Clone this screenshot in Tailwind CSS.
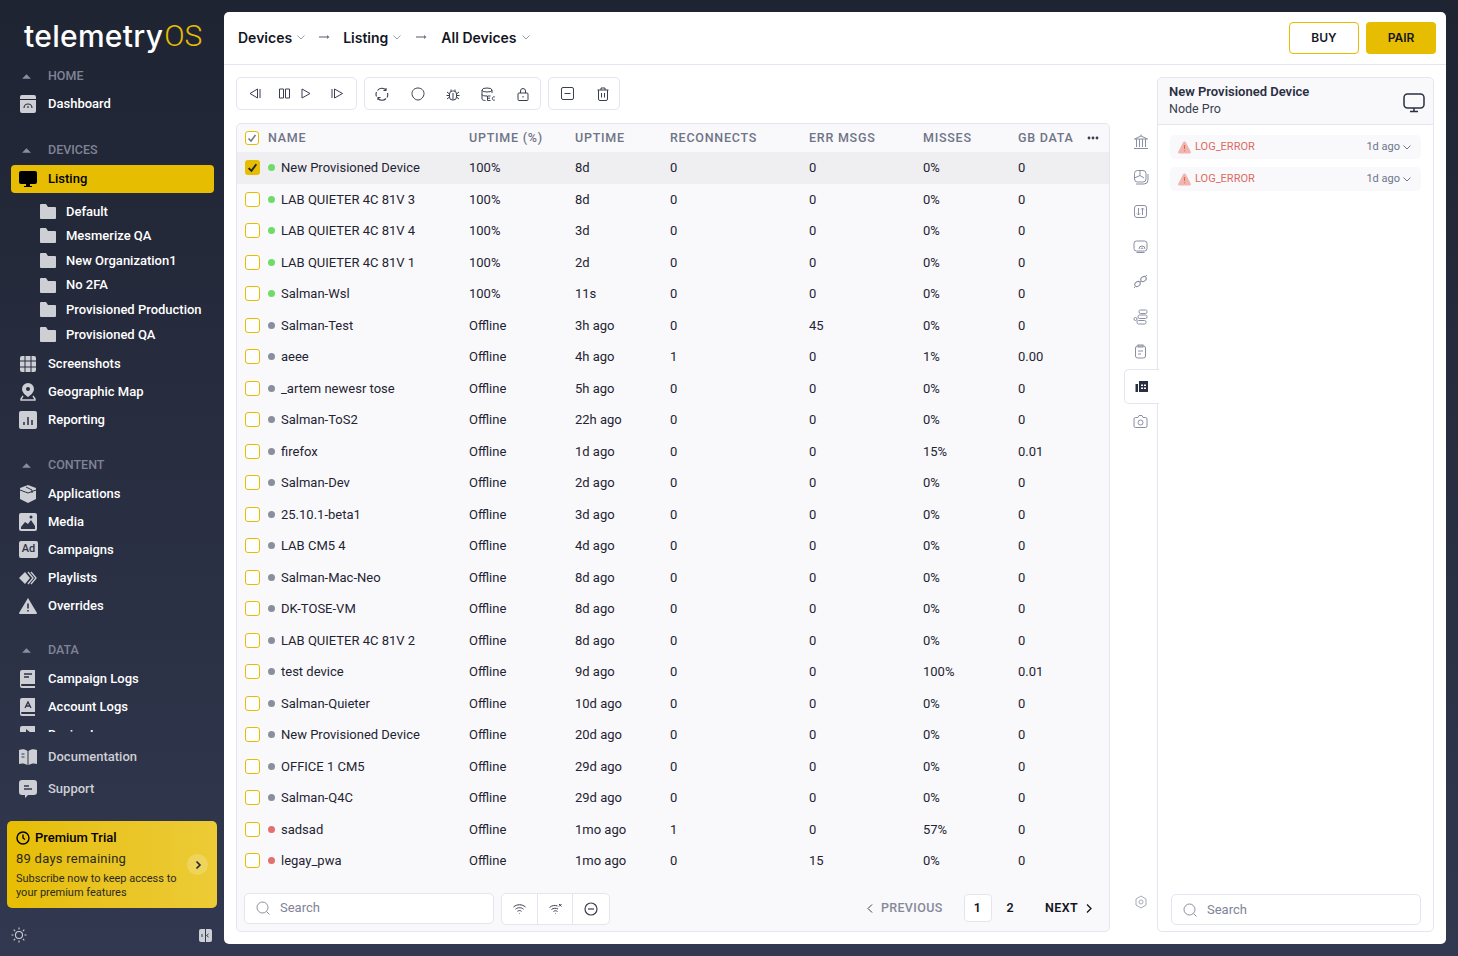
<!DOCTYPE html>
<html lang="en">
  <head>
    <meta charset="UTF-8" />
    <meta name="viewport" content="width=device-width, initial-scale=1.0" />
    <script src="https://cdn.jsdelivr.net/npm/@tailwindcss/browser@4"></script>
    <title>telemetryOS Devices</title>
  </head>

  <body class="h-[956px] w-[1458px] overflow-hidden bg-gradient-to-b from-[#1f2433] to-[#32384f] font-['Roboto',sans-serif] text-[13px] text-[#1f2433]">
    <div class="flex h-full">
      <!-- Sidebar -->
      <aside class="flex h-full w-[224px] shrink-0 flex-col">
        <div class="flex h-[62px] items-start pl-[24px] pt-[18px] font-['Inter',sans-serif] text-[30px] leading-[36px] font-medium tracking-[0.3px] text-white">
          telemetry<span class="ml-px font-['Roboto',sans-serif] font-light tracking-normal text-[#e6bd00]">OS</span>
        </div>

        <nav class="h-[670px] overflow-hidden">
          <div class="flex h-[28px] items-center pl-[21px] text-[12.500px] font-medium text-[#7f8494]">
            <svg class="mr-[16px] h-[11px] w-[11px]" viewBox="0 0 10 10"><path d="M5 3l4 4H1z" fill="#8b8f9d" /></svg>HOME
          </div>
          <a class="flex h-[28px] items-center pl-[19px] font-medium text-white">
            <svg class="mr-[11px] h-[18px] w-[18px]" viewBox="0 0 18 18"><path d="M3 0h12a2 2 0 012 2v2H1V2a2 2 0 012-2zM1 5h16v11a2 2 0 01-2 2H3a2 2 0 01-2-2z" fill="#cdcfd5" /><path d="M5 13a4 4 0 018 0M9 13v-2" stroke="#2a2f42" stroke-width="1.2" fill="none" /></svg>Dashboard
          </a>

          <div class="mt-[18px] flex h-[28px] items-center pl-[21px] text-[12.500px] font-medium text-[#7f8494]">
            <svg class="mr-[16px] h-[11px] w-[11px]" viewBox="0 0 10 10"><path d="M5 3l4 4H1z" fill="#8b8f9d" /></svg>DEVICES
          </div>
          <a class="ml-[11px] mt-px flex h-[28px] w-[203px] items-center rounded-[4px] bg-[#e6bd00] pl-[8px] font-medium text-black">
            <svg class="mr-[11px] h-[18px] w-[18px]" viewBox="0 0 18 18"><path d="M2 1h14a2 2 0 012 2v9a2 2 0 01-2 2h-5v2h2v1H5v-1h2v-2H2a2 2 0 01-2-2V3a2 2 0 012-2z" fill="#000" /></svg>Listing
          </a>

          <ul class="mt-[6px] font-medium text-white">
            <li class="flex h-[24.6px] items-center pl-[40px]"><svg class="mr-[10px] h-[15px] w-[16px]" viewBox="0 0 16 15"><path d="M1 0h5l2 3h7a1 1 0 011 1v10a1 1 0 01-1 1H1a1 1 0 01-1-1V1a1 1 0 011-1z" fill="#cdcfd5" /></svg>Default</li>
            <li class="flex h-[24.6px] items-center pl-[40px]"><svg class="mr-[10px] h-[15px] w-[16px]" viewBox="0 0 16 15"><path d="M1 0h5l2 3h7a1 1 0 011 1v10a1 1 0 01-1 1H1a1 1 0 01-1-1V1a1 1 0 011-1z" fill="#cdcfd5" /></svg>Mesmerize QA</li>
            <li class="flex h-[24.6px] items-center pl-[40px]"><svg class="mr-[10px] h-[15px] w-[16px]" viewBox="0 0 16 15"><path d="M1 0h5l2 3h7a1 1 0 011 1v10a1 1 0 01-1 1H1a1 1 0 01-1-1V1a1 1 0 011-1z" fill="#cdcfd5" /></svg>New Organization1</li>
            <li class="flex h-[24.6px] items-center pl-[40px]"><svg class="mr-[10px] h-[15px] w-[16px]" viewBox="0 0 16 15"><path d="M1 0h5l2 3h7a1 1 0 011 1v10a1 1 0 01-1 1H1a1 1 0 01-1-1V1a1 1 0 011-1z" fill="#cdcfd5" /></svg>No 2FA</li>
            <li class="flex h-[24.6px] items-center pl-[40px]"><svg class="mr-[10px] h-[15px] w-[16px]" viewBox="0 0 16 15"><path d="M1 0h5l2 3h7a1 1 0 011 1v10a1 1 0 01-1 1H1a1 1 0 01-1-1V1a1 1 0 011-1z" fill="#cdcfd5" /></svg>Provisioned Production</li>
            <li class="flex h-[24.6px] items-center pl-[40px]"><svg class="mr-[10px] h-[15px] w-[16px]" viewBox="0 0 16 15"><path d="M1 0h5l2 3h7a1 1 0 011 1v10a1 1 0 01-1 1H1a1 1 0 01-1-1V1a1 1 0 011-1z" fill="#cdcfd5" /></svg>Provisioned QA</li>
          </ul>

          <a class="mt-[3px] flex h-[28px] items-center pl-[19px] font-medium text-white">
            <svg class="mr-[11px] h-[18px] w-[18px]" viewBox="0 0 18 18" fill="#cdcfd5"><path d="M3 1h2.500v4.500H1V3a2 2 0 012-2zM6.500 1h5v4.500h-5zM12.500 1H15a2 2 0 012 2v2.500h-4.500zM1 6.500h4.500v5H1zM6.500 6.500h5v5h-5zM12.500 6.500H17v5h-4.500zM1 12.500h4.500V17H3a2 2 0 01-2-2zM6.500 12.500h5V17h-5zM12.500 12.500H17V15a2 2 0 01-2 2h-2.500z" /></svg>Screenshots
          </a>
          <a class="flex h-[28px] items-center pl-[19px] font-medium text-white">
            <svg class="mr-[11px] h-[18px] w-[18px]" viewBox="0 0 18 18"><path fill-rule="evenodd" d="M9 0a6 6 0 016 6c0 3-3 6-6 8-3-2-6-5-6-8a6 6 0 016-6zm0 4a2 2 0 100 4 2 2 0 000-4z" fill="#cdcfd5" /><path d="M4 13l-2 3v1h14v-1l-2-3" stroke="#cdcfd5" stroke-width="1.4" fill="none" /></svg>Geographic Map
          </a>
          <a class="flex h-[28px] items-center pl-[19px] font-medium text-white">
            <svg class="mr-[11px] h-[18px] w-[18px]" viewBox="0 0 18 18"><rect width="18" height="18" rx="2" fill="#cdcfd5" /><path d="M5 11v3M9 6v8M13 9v5" stroke="#2a2f42" stroke-width="1.5" /></svg>Reporting
          </a>

          <div class="mt-[18px] flex h-[28px] items-center pl-[21px] text-[12.500px] font-medium text-[#7f8494]">
            <svg class="mr-[16px] h-[11px] w-[11px]" viewBox="0 0 10 10"><path d="M5 3l4 4H1z" fill="#8b8f9d" /></svg>CONTENT
          </div>
          <a class="flex h-[28px] items-center pl-[19px] font-medium text-white">
            <svg class="mr-[11px] h-[18px] w-[18px]" viewBox="0 0 18 18"><path d="M9 0l8 3v11l-8 4-8-4V3z" fill="#cdcfd5" /><path d="M1 5l8 3 8-3M7 2l6 3v3" stroke="#2d3246" stroke-width="1" fill="none" /></svg>Applications
          </a>
          <a class="flex h-[28px] items-center pl-[19px] font-medium text-white">
            <svg class="mr-[11px] h-[18px] w-[18px]" viewBox="0 0 18 18"><rect width="18" height="18" rx="2" fill="#cdcfd5" /><path d="M2 14l4-5 3 2 3-4 4 6v3H2z" fill="#2d3246" /><circle cx="12" cy="4" r="1.5" fill="#2d3246" /></svg>Media
          </a>
          <a class="flex h-[28px] items-center pl-[19px] font-medium text-white">
            <span class="mr-[10px] flex h-[17px] w-[19px] items-center justify-center rounded-[2px] bg-[#cdcfd5] text-[11px] font-medium text-[#2d3246]">Ad</span>Campaigns
          </a>
          <a class="flex h-[28px] items-center pl-[19px] font-medium text-white">
            <svg class="mr-[11px] h-[18px] w-[18px]" viewBox="0 0 18 18"><path d="M6 3l5 6-5 6-6-6z" fill="#cdcfd5" /><path d="M9 3l5 6-5 6M12 3l5 6-5 6" stroke="#cdcfd5" stroke-width="1.3" fill="none" /></svg>Playlists
          </a>
          <a class="flex h-[28px] items-center pl-[19px] font-medium text-white">
            <svg class="mr-[11px] h-[18px] w-[18px]" viewBox="0 0 18 18"><path d="M9 1l9 15a1 1 0 01-1 1H1a1 1 0 01-1-1z" fill="#cdcfd5" /><path d="M9 6.500v5M9 13v1.500" stroke="#2d3246" stroke-width="1.6" /></svg>Overrides
          </a>

          <div class="mt-[17px] flex h-[28px] items-center pl-[21px] text-[12.500px] font-medium text-[#7f8494]">
            <svg class="mr-[16px] h-[11px] w-[11px]" viewBox="0 0 10 10"><path d="M5 3l4 4H1z" fill="#8b8f9d" /></svg>DATA
          </div>
          <a class="flex h-[28px] items-center pl-[19px] font-medium text-white">
            <svg class="mr-[11px] h-[18px] w-[18px]" viewBox="0 0 18 18"><path d="M3 0h13v14H3a1 1 0 000 2h13v2H3a2 2 0 01-2-2V2a2 2 0 012-2z" fill="#cdcfd5" /><path d="M5 4h8M5 7h5" stroke="#2d3246" stroke-width="1.4" /></svg>Campaign Logs
          </a>
          <a class="flex h-[28px] items-center pl-[19px] font-medium text-white">
            <svg class="mr-[11px] h-[18px] w-[18px]" viewBox="0 0 18 18"><path d="M3 0h13v14H3a1 1 0 000 2h13v2H3a2 2 0 01-2-2V2a2 2 0 012-2z" fill="#cdcfd5" /><path d="M6 10l3-6 3 6M7 8h4" stroke="#2d3246" stroke-width="1.3" fill="none" /></svg>Account Logs
          </a>
          <a class="flex h-[28px] items-center pl-[19px] font-medium text-white">
            <svg class="mr-[11px] h-[18px] w-[18px]" viewBox="0 0 18 18"><path d="M3 0h13v14H3a1 1 0 000 2h13v2H3a2 2 0 01-2-2V2a2 2 0 012-2z" fill="#cdcfd5" /><path d="M7 3l5 4-5 4z" fill="#2d3246" /></svg>Device Logs
          </a>
        </nav>

        <a class="mt-[9px] flex h-[32px] items-center pl-[19px] font-medium text-[#cdcfd5]">
          <svg class="mr-[11px] h-[16px] w-[18px]" viewBox="0 0 18 16"><path d="M0 1c3-1 6-1 8.500 1v14C6 14.500 3 14 0 15zM18 1c-3-1-6-1-8.500 1v14c2.500-1.500 5.500-2 8.500-1z" fill="#cdcfd5" /><path d="M2.500 5h3M2.500 8h3" stroke="#32384f" /></svg>Documentation
        </a>
        <a class="flex h-[32px] items-center pl-[19px] font-medium text-[#cdcfd5]">
          <svg class="mr-[11px] h-[18px] w-[18px]" viewBox="0 0 18 18"><path d="M3 0h12a3 3 0 013 3v9a3 3 0 01-3 3H9l-3 3v-3H3a3 3 0 01-3-3V3a3 3 0 013-3z" fill="#cdcfd5" /><path d="M5 6h5M5 9h8" stroke="#32384f" stroke-width="1.4" /></svg>Support
        </a>

        <!-- Trial card -->
        <div class="relative ml-[7px] mt-[16px] h-[87px] w-[210px] rounded-[5px] bg-gradient-to-r from-[#e6bd00] to-[#eccb35] pl-[9px] pt-[8px] text-[#2b2a1a]">
          <div class="flex h-[18px] items-center text-[13px] font-medium text-black">
            <svg class="mr-[5px] h-[14px] w-[14px]" viewBox="0 0 14 14" fill="none" stroke="#000" stroke-width="1.4"><circle cx="7" cy="7" r="6" /><path d="M7 3.500V7l2 1.500" /></svg>Premium Trial
          </div>
          <p class="mt-[3px] text-[13px] leading-[18px] tracking-[0.25px]">89 days remaining</p>
          <p class="mt-[4px] w-[175px] text-[11px] leading-[14px]">Subscribe now to keep access to your premium features</p>
          <span class="absolute right-[9px] top-[33px] flex h-[21px] w-[21px] items-center justify-center rounded-full bg-white/20">
            <svg class="h-[10px] w-[10px]" viewBox="0 0 10 10" fill="none" stroke="#1f2433" stroke-width="1.6"><path d="M3.500 1.500L7 5 3.500 8.500" /></svg>
          </span>
        </div>

        <div class="flex h-[48px] items-center justify-between pl-[11px] pr-[12px] pt-[6px]">
          <svg class="h-[16px] w-[16px]" viewBox="0 0 16 16" fill="none" stroke="#cdcfd5" stroke-width="1.1"><circle cx="8" cy="8" r="3.500" /><path d="M8 0.500v2M8 13.500v2M0.500 8h2M13.500 8h2M2.700 2.700l1.400 1.400M11.900 11.900l1.400 1.400M2.700 13.300l1.400-1.400M11.900 4.100l1.400-1.400" /></svg>
          <svg class="h-[13px] w-[13px]" viewBox="0 0 13 13"><rect width="13" height="13" rx="2" fill="#cdcfd5" /><path d="M6.500 0v13M3 5v3M9.500 5l-2 1.500 2 1.500" stroke="#32384f" fill="none" /></svg>
        </div>
      </aside>

      <!-- Main card -->
      <main class="mt-[12px] flex h-[932px] w-[1222px] flex-col rounded-[5px] bg-white">
        <header class="flex h-[53px] shrink-0 items-center justify-between border-b border-[#e4e5f0] pl-[14px] pr-[10px] font-['Inter',sans-serif]">
          <div class="-mt-[2px] flex items-center text-[14px] font-semibold text-[#14161f]">
            <span>Devices</span>
            <svg class="ml-[4px] h-[10px] w-[10px]" viewBox="0 0 10 10" fill="none" stroke="#9a9eae"><path d="M1.500 3.500L5 7l3.500-3.500" /></svg>
            <svg class="mx-[13px] h-[10px] w-[11px]" viewBox="0 0 11 10" fill="#6f7488" stroke="#6f7488"><path d="M0 5h8" stroke-width="1.2" /><path d="M8 3l2.500 2L8 7z" stroke="none" /></svg>
            <span>Listing</span>
            <svg class="ml-[4px] h-[10px] w-[10px]" viewBox="0 0 10 10" fill="none" stroke="#9a9eae"><path d="M1.500 3.500L5 7l3.500-3.500" /></svg>
            <svg class="ml-[14px] mr-[14px] h-[10px] w-[11px]" viewBox="0 0 11 10" fill="#6f7488" stroke="#6f7488"><path d="M0 5h8" stroke-width="1.2" /><path d="M8 3l2.500 2L8 7z" stroke="none" /></svg>
            <span>All Devices</span>
            <svg class="ml-[4px] h-[10px] w-[10px]" viewBox="0 0 10 10" fill="none" stroke="#9a9eae"><path d="M1.500 3.500L5 7l3.500-3.500" /></svg>
          </div>
          <div class="flex gap-[7px] text-[12px] font-semibold text-[#14161f]">
            <button class="h-[32px] w-[70px] rounded-[4px] border border-[#e6bd00] bg-white">BUY</button>
            <button class="h-[32px] w-[70px] rounded-[4px] bg-[#e6bd00]">PAIR</button>
          </div>
        </header>

        <div class="flex flex-1">
          <!-- Left column -->
          <section class="w-[900px] shrink-0 pl-[12px] pt-[12px]">
            <div class="flex gap-[7px]">
              <div class="flex h-[33px] w-[121px] items-center rounded-[5px] border border-[#e4e5f0] text-[#3a3f50]">
                <svg class="ml-[11px] h-[13px] w-[13px]" viewBox="0 0 13 13" fill="none" stroke="currentColor"><path d="M9.500 2L2 6.500l7.500 4.500zM12 2v9" /></svg>
                <svg class="ml-[17px] h-[13px] w-[13px]" viewBox="0 0 13 13" fill="none" stroke="currentColor"><path d="M1.500 2h4v9h-4zM7.500 2h4v9h-4z" /></svg>
                <svg class="ml-[8px] h-[13px] w-[13px]" viewBox="0 0 13 13" fill="none" stroke="currentColor"><path d="M3 2l8 4.500L3 11z" /></svg>
                <svg class="ml-[19px] h-[13px] w-[13px]" viewBox="0 0 13 13" fill="none" stroke="currentColor"><path d="M3.500 2l8 4.500-8 4.500zM1 2v9" /></svg>
              </div>
              <div class="flex h-[33px] w-[177px] items-center rounded-[5px] border border-[#e4e5f0] text-[#3a3f50]">
                <svg class="ml-[10px] h-[14px] w-[14px]" viewBox="0 0 14 14" fill="none" stroke="currentColor" stroke-width="1.100"><path d="M2.500 3.500A5.500 5.500 0 0111 3M12.500 6a5.500 5.500 0 01-.500 4.500M11 11.500a5.500 5.500 0 01-8 0M1.500 9.500A5.500 5.500 0 011.500 5" /><path d="M11 1v2.500H8.500M3 13v-2.500h2.500" /></svg>
                <svg class="ml-[22px] h-[14px] w-[14px]" viewBox="0 0 14 14" fill="none" stroke="currentColor"><path d="M7 1c3 0 6 2 6 5.500S10 13 7 13 1 10 1 6.500 4 1 7 1z" /></svg>
                <svg class="ml-[21px] h-[14px] w-[14px]" viewBox="0 0 14 14" fill="none" stroke="currentColor"><rect x="3.500" y="4" width="7" height="9" rx="3" /><path d="M5 4V2.500M9 4V2.500M1 5l2.500 2M13 5l-2.500 2M0.500 8.500h3M13.500 8.500h-3M1 12l2.500-2M13 12l-2.500-2M7 6v7" /></svg>
                <svg class="ml-[21px] h-[14px] w-[14px]" viewBox="0 0 14 14" fill="none" stroke="currentColor"><ellipse cx="6" cy="3" rx="5" ry="2" /><path d="M1 3v9c0 1 2 1.500 3.500 1.500M11 3v3M1 7.500c0 1 2 1.500 5 1.500" /><path d="M9.500 9h-3v4.500h3M6.500 11.200h2.500M13.800 10a1.700 1.700 0 100 3" /></svg>
                <svg class="ml-[21px] h-[14px] w-[14px]" viewBox="0 0 14 14" fill="none" stroke="currentColor"><rect x="2" y="6" width="10" height="7.500" rx="1" /><path d="M4.500 6V4a2.500 2.500 0 015 0v2M7 9v1.500" /></svg>
              </div>
              <div class="flex h-[33px] w-[72px] items-center rounded-[5px] border border-[#e4e5f0] text-[#3a3f50]">
                <svg class="ml-[12px] h-[13px] w-[13px]" viewBox="0 0 13 13" fill="none" stroke="currentColor"><rect x="0.500" y="0.500" width="12" height="12" rx="1.500" /><path d="M3.500 6.500h6" /></svg>
                <svg class="ml-[22px] h-[14px] w-[14px]" viewBox="0 0 14 14" fill="none" stroke="currentColor"><path d="M1.500 3h11M5 3V1h4v2M2.500 3v9a1.500 1.500 0 001.500 1.500h6a1.500 1.500 0 001.500-1.500V3M5.500 6v4.500M8.500 6v4.500" /></svg>
              </div>
            </div>

            <!-- Device table -->
            <div class="mt-[13px] flex h-[809px] w-[874px] flex-col rounded-[5px] border border-[#e4e5f0] bg-[#f9f9fb]">
              <div class="flex h-[28px] shrink-0 items-center text-[12.500px] font-medium tracking-[0.75px] text-[#6f7488]">
                <span class="ml-[8px] mr-[8px] flex h-[14px] w-[14px] items-center justify-center rounded-[3px] border border-[#e6bd00] bg-white"><svg class="h-[10px] w-[10px]" viewBox="0 0 10 10" fill="none" stroke="#6f7488" stroke-width="1.500"><path d="M1.500 5.500L4 8l4.500-6" /></svg></span>
                <span class="ml-px w-[201px]">NAME</span><span class="w-[106px]">UPTIME (%)</span><span class="w-[95px]">UPTIME</span><span class="w-[139px]">RECONNECTS</span><span class="w-[114px]">ERR MSGS</span><span class="w-[95px]">MISSES</span><span class="w-[69px]">GB DATA</span>
                <svg class="h-[4px] w-[12px]" viewBox="0 0 12 4" fill="#3a3f50"><circle cx="2" cy="2" r="1.400" /><circle cx="6" cy="2" r="1.400" /><circle cx="10" cy="2" r="1.400" /></svg>
              </div>

              <div class="flex h-[31.500px] items-center bg-[#efeff2]"><span class="ml-[8px] flex h-[15px] w-[15px] items-center justify-center rounded-[3px] bg-[#e6bd00]"><svg class="h-[11px] w-[11px]" viewBox="0 0 10 10" fill="none" stroke="#1f2433" stroke-width="1.700"><path d="M1.500 5.500L4 8l4.500-6" /></svg></span><span class="ml-[8px] mr-[6px] h-[7px] w-[7px] rounded-full bg-[#6fdc6a]"></span><span class="w-[188px]">New Provisioned Device</span><span class="w-[106px]">100%</span><span class="w-[95px]">8d</span><span class="w-[139px]">0</span><span class="w-[114px]">0</span><span class="w-[95px]">0%</span><span>0</span></div>
              <div class="flex h-[31.500px] items-center"><span class="ml-[8px] h-[15px] w-[15px] rounded-[3px] border border-[#e6bd00] bg-white"></span><span class="ml-[8px] mr-[6px] h-[7px] w-[7px] rounded-full bg-[#6fdc6a]"></span><span class="w-[188px]">LAB QUIETER 4C 81V 3</span><span class="w-[106px]">100%</span><span class="w-[95px]">8d</span><span class="w-[139px]">0</span><span class="w-[114px]">0</span><span class="w-[95px]">0%</span><span>0</span></div>
              <div class="flex h-[31.500px] items-center"><span class="ml-[8px] h-[15px] w-[15px] rounded-[3px] border border-[#e6bd00] bg-white"></span><span class="ml-[8px] mr-[6px] h-[7px] w-[7px] rounded-full bg-[#6fdc6a]"></span><span class="w-[188px]">LAB QUIETER 4C 81V 4</span><span class="w-[106px]">100%</span><span class="w-[95px]">3d</span><span class="w-[139px]">0</span><span class="w-[114px]">0</span><span class="w-[95px]">0%</span><span>0</span></div>
              <div class="flex h-[31.500px] items-center"><span class="ml-[8px] h-[15px] w-[15px] rounded-[3px] border border-[#e6bd00] bg-white"></span><span class="ml-[8px] mr-[6px] h-[7px] w-[7px] rounded-full bg-[#6fdc6a]"></span><span class="w-[188px]">LAB QUIETER 4C 81V 1</span><span class="w-[106px]">100%</span><span class="w-[95px]">2d</span><span class="w-[139px]">0</span><span class="w-[114px]">0</span><span class="w-[95px]">0%</span><span>0</span></div>
              <div class="flex h-[31.500px] items-center"><span class="ml-[8px] h-[15px] w-[15px] rounded-[3px] border border-[#e6bd00] bg-white"></span><span class="ml-[8px] mr-[6px] h-[7px] w-[7px] rounded-full bg-[#6fdc6a]"></span><span class="w-[188px]">Salman-Wsl</span><span class="w-[106px]">100%</span><span class="w-[95px]">11s</span><span class="w-[139px]">0</span><span class="w-[114px]">0</span><span class="w-[95px]">0%</span><span>0</span></div>
              <div class="flex h-[31.500px] items-center"><span class="ml-[8px] h-[15px] w-[15px] rounded-[3px] border border-[#e6bd00] bg-white"></span><span class="ml-[8px] mr-[6px] h-[7px] w-[7px] rounded-full bg-[#8b8f9d]"></span><span class="w-[188px]">Salman-Test</span><span class="w-[106px]">Offline</span><span class="w-[95px]">3h ago</span><span class="w-[139px]">0</span><span class="w-[114px]">45</span><span class="w-[95px]">0%</span><span>0</span></div>
              <div class="flex h-[31.500px] items-center"><span class="ml-[8px] h-[15px] w-[15px] rounded-[3px] border border-[#e6bd00] bg-white"></span><span class="ml-[8px] mr-[6px] h-[7px] w-[7px] rounded-full bg-[#8b8f9d]"></span><span class="w-[188px]">aeee</span><span class="w-[106px]">Offline</span><span class="w-[95px]">4h ago</span><span class="w-[139px]">1</span><span class="w-[114px]">0</span><span class="w-[95px]">1%</span><span>0.00</span></div>
              <div class="flex h-[31.500px] items-center"><span class="ml-[8px] h-[15px] w-[15px] rounded-[3px] border border-[#e6bd00] bg-white"></span><span class="ml-[8px] mr-[6px] h-[7px] w-[7px] rounded-full bg-[#8b8f9d]"></span><span class="w-[188px]">_artem newesr tose</span><span class="w-[106px]">Offline</span><span class="w-[95px]">5h ago</span><span class="w-[139px]">0</span><span class="w-[114px]">0</span><span class="w-[95px]">0%</span><span>0</span></div>
              <div class="flex h-[31.500px] items-center"><span class="ml-[8px] h-[15px] w-[15px] rounded-[3px] border border-[#e6bd00] bg-white"></span><span class="ml-[8px] mr-[6px] h-[7px] w-[7px] rounded-full bg-[#8b8f9d]"></span><span class="w-[188px]">Salman-ToS2</span><span class="w-[106px]">Offline</span><span class="w-[95px]">22h ago</span><span class="w-[139px]">0</span><span class="w-[114px]">0</span><span class="w-[95px]">0%</span><span>0</span></div>
              <div class="flex h-[31.500px] items-center"><span class="ml-[8px] h-[15px] w-[15px] rounded-[3px] border border-[#e6bd00] bg-white"></span><span class="ml-[8px] mr-[6px] h-[7px] w-[7px] rounded-full bg-[#8b8f9d]"></span><span class="w-[188px]">firefox</span><span class="w-[106px]">Offline</span><span class="w-[95px]">1d ago</span><span class="w-[139px]">0</span><span class="w-[114px]">0</span><span class="w-[95px]">15%</span><span>0.01</span></div>
              <div class="flex h-[31.500px] items-center"><span class="ml-[8px] h-[15px] w-[15px] rounded-[3px] border border-[#e6bd00] bg-white"></span><span class="ml-[8px] mr-[6px] h-[7px] w-[7px] rounded-full bg-[#8b8f9d]"></span><span class="w-[188px]">Salman-Dev</span><span class="w-[106px]">Offline</span><span class="w-[95px]">2d ago</span><span class="w-[139px]">0</span><span class="w-[114px]">0</span><span class="w-[95px]">0%</span><span>0</span></div>
              <div class="flex h-[31.500px] items-center"><span class="ml-[8px] h-[15px] w-[15px] rounded-[3px] border border-[#e6bd00] bg-white"></span><span class="ml-[8px] mr-[6px] h-[7px] w-[7px] rounded-full bg-[#8b8f9d]"></span><span class="w-[188px]">25.10.1-beta1</span><span class="w-[106px]">Offline</span><span class="w-[95px]">3d ago</span><span class="w-[139px]">0</span><span class="w-[114px]">0</span><span class="w-[95px]">0%</span><span>0</span></div>
              <div class="flex h-[31.500px] items-center"><span class="ml-[8px] h-[15px] w-[15px] rounded-[3px] border border-[#e6bd00] bg-white"></span><span class="ml-[8px] mr-[6px] h-[7px] w-[7px] rounded-full bg-[#8b8f9d]"></span><span class="w-[188px]">LAB CM5 4</span><span class="w-[106px]">Offline</span><span class="w-[95px]">4d ago</span><span class="w-[139px]">0</span><span class="w-[114px]">0</span><span class="w-[95px]">0%</span><span>0</span></div>
              <div class="flex h-[31.500px] items-center"><span class="ml-[8px] h-[15px] w-[15px] rounded-[3px] border border-[#e6bd00] bg-white"></span><span class="ml-[8px] mr-[6px] h-[7px] w-[7px] rounded-full bg-[#8b8f9d]"></span><span class="w-[188px]">Salman-Mac-Neo</span><span class="w-[106px]">Offline</span><span class="w-[95px]">8d ago</span><span class="w-[139px]">0</span><span class="w-[114px]">0</span><span class="w-[95px]">0%</span><span>0</span></div>
              <div class="flex h-[31.500px] items-center"><span class="ml-[8px] h-[15px] w-[15px] rounded-[3px] border border-[#e6bd00] bg-white"></span><span class="ml-[8px] mr-[6px] h-[7px] w-[7px] rounded-full bg-[#8b8f9d]"></span><span class="w-[188px]">DK-TOSE-VM</span><span class="w-[106px]">Offline</span><span class="w-[95px]">8d ago</span><span class="w-[139px]">0</span><span class="w-[114px]">0</span><span class="w-[95px]">0%</span><span>0</span></div>
              <div class="flex h-[31.500px] items-center"><span class="ml-[8px] h-[15px] w-[15px] rounded-[3px] border border-[#e6bd00] bg-white"></span><span class="ml-[8px] mr-[6px] h-[7px] w-[7px] rounded-full bg-[#8b8f9d]"></span><span class="w-[188px]">LAB QUIETER 4C 81V 2</span><span class="w-[106px]">Offline</span><span class="w-[95px]">8d ago</span><span class="w-[139px]">0</span><span class="w-[114px]">0</span><span class="w-[95px]">0%</span><span>0</span></div>
              <div class="flex h-[31.500px] items-center"><span class="ml-[8px] h-[15px] w-[15px] rounded-[3px] border border-[#e6bd00] bg-white"></span><span class="ml-[8px] mr-[6px] h-[7px] w-[7px] rounded-full bg-[#8b8f9d]"></span><span class="w-[188px]">test device</span><span class="w-[106px]">Offline</span><span class="w-[95px]">9d ago</span><span class="w-[139px]">0</span><span class="w-[114px]">0</span><span class="w-[95px]">100%</span><span>0.01</span></div>
              <div class="flex h-[31.500px] items-center"><span class="ml-[8px] h-[15px] w-[15px] rounded-[3px] border border-[#e6bd00] bg-white"></span><span class="ml-[8px] mr-[6px] h-[7px] w-[7px] rounded-full bg-[#8b8f9d]"></span><span class="w-[188px]">Salman-Quieter</span><span class="w-[106px]">Offline</span><span class="w-[95px]">10d ago</span><span class="w-[139px]">0</span><span class="w-[114px]">0</span><span class="w-[95px]">0%</span><span>0</span></div>
              <div class="flex h-[31.500px] items-center"><span class="ml-[8px] h-[15px] w-[15px] rounded-[3px] border border-[#e6bd00] bg-white"></span><span class="ml-[8px] mr-[6px] h-[7px] w-[7px] rounded-full bg-[#8b8f9d]"></span><span class="w-[188px]">New Provisioned Device</span><span class="w-[106px]">Offline</span><span class="w-[95px]">20d ago</span><span class="w-[139px]">0</span><span class="w-[114px]">0</span><span class="w-[95px]">0%</span><span>0</span></div>
              <div class="flex h-[31.500px] items-center"><span class="ml-[8px] h-[15px] w-[15px] rounded-[3px] border border-[#e6bd00] bg-white"></span><span class="ml-[8px] mr-[6px] h-[7px] w-[7px] rounded-full bg-[#8b8f9d]"></span><span class="w-[188px]">OFFICE 1 CM5</span><span class="w-[106px]">Offline</span><span class="w-[95px]">29d ago</span><span class="w-[139px]">0</span><span class="w-[114px]">0</span><span class="w-[95px]">0%</span><span>0</span></div>
              <div class="flex h-[31.500px] items-center"><span class="ml-[8px] h-[15px] w-[15px] rounded-[3px] border border-[#e6bd00] bg-white"></span><span class="ml-[8px] mr-[6px] h-[7px] w-[7px] rounded-full bg-[#8b8f9d]"></span><span class="w-[188px]">Salman-Q4C</span><span class="w-[106px]">Offline</span><span class="w-[95px]">29d ago</span><span class="w-[139px]">0</span><span class="w-[114px]">0</span><span class="w-[95px]">0%</span><span>0</span></div>
              <div class="flex h-[31.500px] items-center"><span class="ml-[8px] h-[15px] w-[15px] rounded-[3px] border border-[#e6bd00] bg-white"></span><span class="ml-[8px] mr-[6px] h-[7px] w-[7px] rounded-full bg-[#e36f6f]"></span><span class="w-[188px]">sadsad</span><span class="w-[106px]">Offline</span><span class="w-[95px]">1mo ago</span><span class="w-[139px]">1</span><span class="w-[114px]">0</span><span class="w-[95px]">57%</span><span>0</span></div>
              <div class="flex h-[31.500px] items-center"><span class="ml-[8px] h-[15px] w-[15px] rounded-[3px] border border-[#e6bd00] bg-white"></span><span class="ml-[8px] mr-[6px] h-[7px] w-[7px] rounded-full bg-[#e36f6f]"></span><span class="w-[188px]">legay_pwa</span><span class="w-[106px]">Offline</span><span class="w-[95px]">1mo ago</span><span class="w-[139px]">0</span><span class="w-[114px]">15</span><span class="w-[95px]">0%</span><span>0</span></div>

              <div class="mt-[16px] flex items-start pl-[7px]">
                <div class="flex h-[31px] w-[250px] items-center rounded-[5px] border border-[#e4e5f0] bg-white pl-[11px] text-[#7f8498]">
                  <svg class="mr-[10px] h-[14px] w-[14px]" viewBox="0 0 14 14" fill="none" stroke="#8b8f9d"><circle cx="6.500" cy="6.500" r="5.500" /><path d="M10.500 10.500l3 3" /></svg>Search
                </div>
                <div class="ml-[7px] flex h-[32px] w-[109px] rounded-[5px] border border-[#e4e5f0] bg-white">
                  <span class="flex w-[36px] items-center justify-center border-r border-[#e4e5f0]"><svg class="h-[12px] w-[13px]" viewBox="0 0 13 12" fill="none" stroke="#3a3f50"><path d="M0.500 4c3.500-3 8.500-3 12 0M2.500 6.200c2.500-2 5.500-2 8 0M4.500 8.300c1.300-1 2.700-1 4 0M6.500 10.500v0.500" /></svg></span>
                  <span class="flex w-[36px] items-center justify-center border-r border-[#e4e5f0]"><svg class="h-[12px] w-[13px]" viewBox="0 0 13 12" fill="none" stroke="#3a3f50"><path d="M0.500 4.500c2.500-2.200 5.500-2.500 8-1.500M2.500 6.500c2-1.500 4.500-1.600 6.500-0.500M4.500 8.500c1.300-1 2.700-1 4 0M6.500 10.500v0.500M10 1l2.500 2.500M12.500 1L10 3.500" /></svg></span>
                  <span class="flex w-[36px] items-center justify-center"><svg class="h-[14px] w-[14px]" viewBox="0 0 14 14" fill="none" stroke="#3a3f50" stroke-width="1.200"><circle cx="7" cy="7" r="6" /><path d="M4 7h6" /></svg></span>
                </div>
                <div class="ml-auto flex h-[31px] items-center pr-[17px] font-['Roboto',sans-serif] text-[12.500px] font-medium tracking-[0.35px]">
                  <span class="flex items-center text-[#85899a]"><svg class="mr-[8px] h-[9px] w-[6px]" viewBox="0 0 6 9" fill="none" stroke="#3a3f50"><path d="M5 0.500L1 4.500l4 4" /></svg>PREVIOUS</span>
                  <span class="ml-[21px] flex h-[28px] w-[28px] items-center justify-center rounded-[4px] border border-[#e4e5f0] bg-white font-semibold text-[#14161f]">1</span>
                  <span class="ml-[15px] font-semibold text-[#14161f]">2</span>
                  <span class="ml-[31px] flex items-center font-semibold text-[#14161f]">NEXT<svg class="ml-[8px] h-[9px] w-[6px]" viewBox="0 0 6 9" fill="none" stroke="#14161f" stroke-width="1.300"><path d="M1 0.500l4 4-4 4" /></svg></span>
                </div>
              </div>
            </div>
          </section>

          <!-- Tab rail -->
          <div class="relative w-[33px] shrink-0 pt-[59px] text-[#8a8fa3]">
            <div class="flex h-[35px] items-center justify-center"><svg class="h-[16px] w-[16px]" viewBox="0 0 16 16" fill="none" stroke="currentColor"><path d="M1.500 5L8 2l6.500 3zM3.500 5v8M6.500 5v8M9.500 5v8M12.500 5v8M1 14.500h14M8 2V0.500" /></svg></div>
            <div class="flex h-[35px] items-center justify-center"><svg class="h-[16px] w-[16px]" viewBox="0 0 16 16" fill="none" stroke="currentColor"><rect x="1.500" y="1.500" width="11.500" height="11.500" rx="3" /><path d="M3 15h8a4 4 0 004-4V5M7 1.500v5M1.500 9L7 6.500l4 2.500" /></svg></div>
            <div class="flex h-[35px] items-center justify-center"><svg class="h-[15px] w-[15px]" viewBox="0 0 15 15" fill="none" stroke="currentColor"><rect x="1.500" y="1.500" width="12" height="12" rx="2.500" /><path d="M5.500 4v7M4 9.500L5.500 11 7 9.500M9.500 11V4M8 5.500L9.500 4 11 5.500" /></svg></div>
            <div class="flex h-[35px] items-center justify-center"><svg class="h-[15px] w-[15px]" viewBox="0 0 15 15" fill="none" stroke="currentColor"><rect x="1" y="2" width="13" height="10" rx="2.500" /><path d="M6 10a3 3 0 016 0M8 10a1 1 0 012 0M3.500 13.500h8" /></svg></div>
            <div class="flex h-[35px] items-center justify-center"><svg class="h-[15px] w-[15px]" viewBox="0 0 15 15" fill="none" stroke="currentColor"><ellipse cx="4.500" cy="10" rx="3" ry="2.200" transform="rotate(-35 4.500 10)" /><ellipse cx="10.500" cy="5" rx="3" ry="2.200" transform="rotate(-35 10.500 5)" /><path d="M7 8l1.200-1M1 14l1.500-1.500M12.500 2.500L14 1" /></svg></div>
            <div class="flex h-[35px] items-center justify-center"><svg class="h-[16px] w-[16px]" viewBox="0 0 16 16" fill="none" stroke="currentColor"><rect x="6" y="1" width="8" height="3.500" rx="1.500" /><rect x="5" y="6" width="9" height="3.500" rx="1.500" /><rect x="4" y="11.500" width="9" height="3.500" rx="1.500" /><circle cx="2.500" cy="10" r="1.500" /></svg></div>
            <div class="flex h-[35px] items-center justify-center"><svg class="h-[15px] w-[15px]" viewBox="0 0 15 15" fill="none" stroke="currentColor"><rect x="2.500" y="2" width="10" height="12" rx="2" /><rect x="5" y="1" width="5" height="2" /><path d="M5 7h5M5 10h3" /></svg></div>
            <div class="relative z-10 flex h-[35px] w-[35px] items-center justify-center rounded-l-[5px] border-y border-l border-[#e4e5f0] bg-white pr-[2px]"><svg class="h-[13px] w-[13px]" viewBox="0 0 13 13" fill="#2a2f42"><path d="M4 1h9v11H4zM0.500 4H3v8H0.500z" /><path d="M6 4.500h2v1.500H6zM9 4.500h2v1.500H9zM6 7.500h2V9H6zM9 7.500h2V9H9z" fill="#fff" /></svg></div>
            <div class="flex h-[35px] items-center justify-center"><svg class="h-[15px] w-[15px]" viewBox="0 0 15 15" fill="none" stroke="currentColor"><path d="M1 5a1.500 1.500 0 011.500-1.500H5l1-2h3l1 2h2.500A1.500 1.500 0 0114 5v7a1.500 1.500 0 01-1.500 1.500h-10A1.500 1.500 0 011 12z" /><circle cx="7.500" cy="8.500" r="2.500" /></svg></div>
            <div class="absolute left-[10px] top-[830px]"><svg class="h-[14px] w-[14px]" viewBox="0 0 14 14" fill="none" stroke="#a6aabb"><path d="M7 1l5 3v6l-5 3-5-3V4z" /><circle cx="7" cy="7" r="2" /></svg></div>
          </div>

          <!-- Right panel -->
          <aside class="mt-[12px] flex h-[855px] w-[277px] flex-col rounded-[5px] border border-[#e4e5f0]">
            <div class="flex h-[47px] shrink-0 items-center justify-between rounded-t-[5px] border-b border-[#e4e5f0] bg-[#f9f9fb] pl-[11px] pr-[8px]">
              <div class="-mt-[3px]">
                <p class="text-[13px] leading-[17px] font-semibold text-[#2a2f42]">New Provisioned Device</p>
                <p class="mt-[1px] text-[12.500px] leading-[16px] text-[#3a3f50]">Node Pro</p>
              </div>
              <svg class="mt-[4px] h-[20px] w-[22px]" viewBox="0 0 22 20" fill="none" stroke="#2a2f42" stroke-width="1.500"><rect x="1" y="1" width="20" height="14" rx="3.500" /><path d="M11 15v3M7 18.500h8" /></svg>
            </div>
            <div class="ml-[12px] mt-[10px] flex h-[24px] w-[251px] items-center rounded-[5px] bg-[#f9f9fb] pl-[8px] pr-[10px] text-[11px]">
              <svg class="mr-[4px] h-[13px] w-[13px]" viewBox="0 0 13 13"><path d="M6.500 0.500c.6 0 1 .3 1.300.8l5 9.500c.4.800-.1 1.700-1 1.700h-10.600c-.9 0-1.400-.9-1-1.700l5-9.500c.3-.5.700-.8 1.300-.8z" fill="#f0b5ad" /><path d="M6.500 4v4M6.500 9.300v1" stroke="#d9695f" stroke-width="1.100" /></svg>
              <span class="text-[#dc6a5e]">LOG_ERROR</span>
              <span class="ml-auto text-[#6f7488]">1d ago</span>
              <svg class="ml-[3px] h-[8px] w-[8px]" viewBox="0 0 8 8" fill="none" stroke="#6f7488"><path d="M0.500 2.500L4 6l3.500-3.500" /></svg>
            </div>
            <div class="ml-[12px] mt-[8px] flex h-[24px] w-[251px] items-center rounded-[5px] bg-[#f9f9fb] pl-[8px] pr-[10px] text-[11px]">
              <svg class="mr-[4px] h-[13px] w-[13px]" viewBox="0 0 13 13"><path d="M6.500 0.500c.6 0 1 .3 1.300.8l5 9.500c.4.800-.1 1.700-1 1.700h-10.600c-.9 0-1.400-.9-1-1.700l5-9.500c.3-.5.700-.8 1.300-.8z" fill="#f0b5ad" /><path d="M6.500 4v4M6.500 9.300v1" stroke="#d9695f" stroke-width="1.100" /></svg>
              <span class="text-[#dc6a5e]">LOG_ERROR</span>
              <span class="ml-auto text-[#6f7488]">1d ago</span>
              <svg class="ml-[3px] h-[8px] w-[8px]" viewBox="0 0 8 8" fill="none" stroke="#6f7488"><path d="M0.500 2.500L4 6l3.500-3.500" /></svg>
            </div>
            <div class="ml-[13px] mt-auto mb-[6px] flex h-[31px] w-[250px] items-center rounded-[5px] border border-[#e4e5f0] bg-white pl-[11px] text-[#7f8498]">
              <svg class="mr-[10px] h-[14px] w-[14px]" viewBox="0 0 14 14" fill="none" stroke="#8b8f9d"><circle cx="6.500" cy="6.500" r="5.500" /><path d="M10.500 10.500l3 3" /></svg>Search
            </div>
          </aside>
        </div>
      </main>
    </div>
  </body>
</html>
